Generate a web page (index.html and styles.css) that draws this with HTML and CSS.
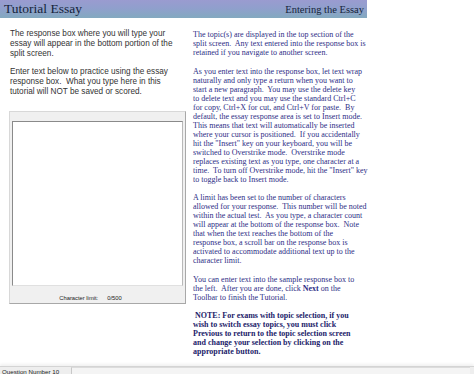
FILE: index.html
```html
<!DOCTYPE html>
<html lang="en">
<head>
    <meta charset="UTF-8">
    <title>Tutorial Essay</title>
    <link rel="stylesheet" href="styles.css">
</head>
<body>
    <div class="screen">
        <div class="title-bar">
            <span class="title">Tutorial Essay</span>
            <span class="section">Entering the Essay</span>
        </div>

        <div class="content">
            <div class="left">
                <p>The response box where you will type your essay will appear in the bottom portion of the split screen.</p>
                <p>Enter text below to practice using the essay response box.&nbsp; What you type here in this tutorial will NOT be saved or scored.</p>

                <div class="response-panel">
                    <textarea class="response-box"></textarea>
                    <div class="char-count">
                        <span>Character limit:</span>
                        <span>0/500</span>
                    </div>
                </div>
            </div>

            <!-- line breaks kept as in the original tutorial text -->
            <div class="right">
                <p>The topic(s) are displayed in the top section of the<br>
                split screen.&nbsp; Any text entered into the response box is<br>
                retained if you navigate to another screen.</p>
                <p>As you enter text into the response box, let text wrap<br>
                naturally and only type a return when you want to<br>
                start a new paragraph.&nbsp; You may use the delete key<br>
                to delete text and you may use the standard Ctrl+C<br>
                for copy, Ctrl+X for cut, and Ctrl+V for paste.&nbsp; By<br>
                default, the essay response area is set to Insert mode.<br>
                This means that text will automatically be inserted<br>
                where your cursor is positioned.&nbsp; If you accidentally<br>
                hit the "Insert" key on your keyboard, you will be<br>
                switched to Overstrike mode.&nbsp; Overstrike mode<br>
                replaces existing text as you type, one character at a<br>
                time.&nbsp; To turn off Overstrike mode, hit the "Insert" key<br>
                to toggle back to Insert mode.</p>
                <p>A limit has been set to the number of characters<br>
                allowed for your response.&nbsp; This number will be noted<br>
                within the actual test.&nbsp; As you type, a character count<br>
                will appear at the bottom of the response box.&nbsp; Note<br>
                that when the text reaches the bottom of the<br>
                response box, a scroll bar on the response box is<br>
                activated to accommodate additional text up to the<br>
                character limit.</p>
                <p>You can enter text into the sample response box to<br>
                the left.&nbsp; After you are done, click <b>Next</b> on the<br>
                Toolbar to finish the Tutorial.</p>
                <p class="note">&nbsp;NOTE: For exams with topic selection, if you<br>
                wish to switch essay topics, you must click<br>
                Previous to return to the topic selection screen<br>
                and change your selection by clicking on the<br>
                appropriate button.</p>
            </div>
        </div>

        <div class="status-bar">
            <span class="question">Question Number 10</span>
            <span class="status-fill"></span>
        </div>
    </div>
</body>
</html>
```

FILE: styles.css
```css
body {
    margin: 0;
    background: #ffffff;
}

.screen {
    width: 474px;
    height: 374px;
    display: flex;
    flex-direction: column;
    overflow: hidden;
}

.title-bar {
    width: 367px;
    height: 19px;
    box-sizing: border-box;
    padding: 0 3px 0 4px;
    display: flex;
    justify-content: space-between;
    align-items: baseline;
    background: linear-gradient(to bottom, #9a9bd0, #8fa0cc 50%, #83a9bf);
    color: #15233a;
    font-family: "Liberation Serif", serif;
}

.title {
    font-size: 13.5px;
    line-height: 18px;
}

.section {
    font-size: 10.5px;
}

.content {
    flex: 1;
    display: flex;
    padding-top: 11px;
}

.left {
    width: 177px;
    margin-left: 9px;
    font-family: "Liberation Sans", Arial, sans-serif;
    font-size: 8.2px;
    line-height: 10px;
    color: #333333;
}

.left p {
    width: 172px;
    margin: 0 0 8px 1px;
}

.response-panel {
    margin-top: 14px;
    height: 193px;
    box-sizing: border-box;
    padding: 9px 2px 0 2px;
    background: #f0f0f0;
    border: 1px solid #d8d8d8;
    border-right-color: #a8a8a8;
    border-bottom-color: #a8a8a8;
    display: flex;
    flex-direction: column;
}

.response-box {
    display: block;
    height: 163px;
    margin: 0;
    padding: 0;
    resize: none;
    background: #ffffff;
    border: 1px solid #8a8a8a;
    border-right-color: #b8b8b8;
    border-bottom-color: #e0e0e0;
}

.char-count {
    display: flex;
    justify-content: center;
    gap: 9px;
    padding-top: 7px;
    padding-right: 14px;
    font-size: 5.8px;
    line-height: 10px;
    color: #222222;
}

.right {
    width: 176px;
    margin-left: 7px;
    font-family: "Liberation Serif", serif;
    font-size: 8px;
    line-height: 9px;
    color: #2e2e86;
    padding-top: 1px;
}

.right p {
    margin: 0 0 9.5px 0;
    white-space: nowrap;
}

.right .note {
    font-weight: bold;
    color: #1c1c6a;
}

.status-bar {
    height: 9px;
    display: flex;
    background: #eeeeee;
    border-top: 1px solid #d4d4d4;
    box-shadow: 0 -2px 3px rgba(0, 0, 0, 0.06);
    font-family: "Liberation Sans", Arial, sans-serif;
    font-size: 6.2px;
    line-height: 9px;
    color: #222222;
}

.question {
    width: 69px;
    padding-left: 2px;
    white-space: nowrap;
    overflow: hidden;
}

.status-fill {
    flex: 1;
    margin-right: 4px;
    border-left: 1px solid #c8c8c8;
    border-top: 1px solid #dcdcdc;
    background: #f4f4f4;
}
```
